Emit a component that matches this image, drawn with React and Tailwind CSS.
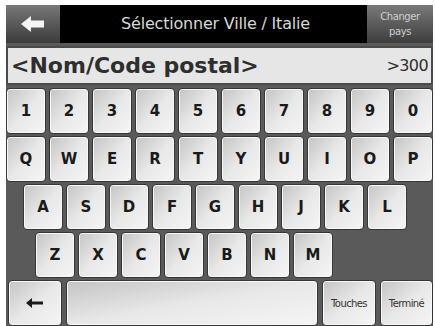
import React from "react";

const rows = [
  ["1", "2", "3", "4", "5", "6", "7", "8", "9", "0"],
  ["Q", "W", "E", "R", "T", "Y", "U", "I", "O", "P"],
  ["A", "S", "D", "F", "G", "H", "J", "K", "L"],
  ["Z", "X", "C", "V", "B", "N", "M"],
];

const rowPad = ["pl-0", "pl-0", "pl-[17px]", "pl-[29px]"];

const keyCls =
  "h-[46px] rounded-[4px] border border-[#363636] bg-gradient-to-br from-[#c4c4c4] via-[#e8e8e8] to-[#f5f5f5] shadow-[inset_0_0_0_1px_#f8f8f8] flex items-center justify-center text-[#1a1a1a]";

function Key({ label }) {
  return (
    <div className={`${keyCls} w-[40px] text-[15px] font-bold`}>{label}</div>
  );
}

export default function App() {
  return (
    <div
      className="w-[435px] h-[326px] bg-white pt-[5px] pl-[6px] pr-[2px] overflow-hidden"
      style={{ fontFamily: '"DejaVu Sans", sans-serif' }}
    >
      {/* header */}
      <div className="flex h-[38px]">
        <div className="w-[54px] bg-gradient-to-b from-[#787878] to-[#3c3c3c] flex items-center justify-center">
          <svg width="26" height="18" viewBox="0 0 26 18">
            <path d="M1 9 L11 1 L11 5.5 L24 5.5 L24 12.5 L11 12.5 L11 17 Z" fill="#f4f4f4" />
          </svg>
        </div>
        <div className="flex-1 bg-black flex items-center justify-center text-[#d8d8d8] text-[16px] tracking-[-0.2px] pl-[4px]">
          Sélectionner Ville / Italie
        </div>
        <div className="w-[66px] bg-gradient-to-b from-[#7a7a7a] to-[#3e3e3e] flex flex-col items-center justify-center text-[#cfcfcf] text-[10px] leading-[15px] tracking-[-0.4px]">
          <span>Changer</span>
          <span>pays</span>
        </div>
      </div>

      {/* keyboard body */}
      <div className="bg-[#5a5a5a] h-[283px] pt-[3px] flex flex-col gap-[2px]">
        <div className="h-[40px] mb-[1px] bg-[#e6e6e6] border-2 border-[#4a4a4a] rounded-[2px] flex items-center justify-between px-[3px] text-[#2e2e2e]">
          <span className="text-[22px] font-bold tracking-[0px]">&lt;Nom/Code postal&gt;</span>
          <span className="text-[16px] tracking-[-0.6px]">&gt;300</span>
        </div>

        {rows.map((r, i) => (
          <div key={i} className={`flex gap-[3px] ${rowPad[i]}`}>
            {r.map((k) => (
              <Key key={k} label={k} />
            ))}
          </div>
        ))}

        <div className="flex gap-[4px] pl-[2px]">
          <div className={`${keyCls} w-[54px]`}>
            <svg width="18" height="10" viewBox="0 0 18 10">
              <path d="M0 5 L6 0 L6 3.5 L17 3.5 L17 6.5 L6 6.5 L6 10 Z" fill="#1a1a1a" />
            </svg>
          </div>
          <div className={`${keyCls} w-[252px]`} />
          <div className={`${keyCls} w-[54px] text-[10px] tracking-[-0.6px] text-[#333]`}>Touches</div>
          <div className={`${keyCls} w-[53px] text-[10px] tracking-[-0.6px] text-[#333]`}>Terminé</div>
        </div>
      </div>
    </div>
  );
}
